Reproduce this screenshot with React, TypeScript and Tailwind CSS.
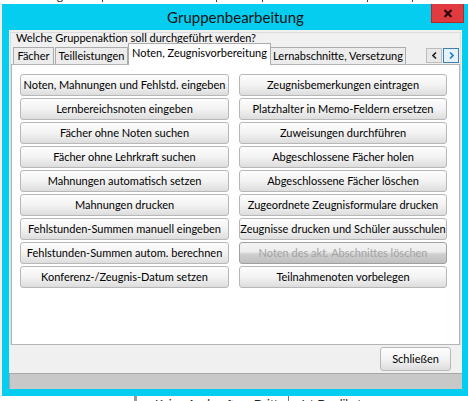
import React from 'react';

const leftButtons = [
  'Noten, Mahnungen und Fehlstd. eingeben',
  'Lernbereichsnoten eingeben',
  'Fächer ohne Noten suchen',
  'Fächer ohne Lehrkraft suchen',
  'Mahnungen automatisch setzen',
  'Mahnungen drucken',
  'Fehlstunden-Summen manuell eingeben',
  'Fehlstunden-Summen autom. berechnen',
  'Konferenz-/Zeugnis-Datum setzen',
];

const rightButtons = [
  'Zeugnisbemerkungen eintragen',
  'Platzhalter in Memo-Feldern ersetzen',
  'Zuweisungen durchführen',
  'Abgeschlossene Fächer holen',
  'Abgeschlossene Fächer löschen',
  'Zugeordnete Zeugnisformulare drucken',
  'Zeugnisse drucken und Schüler ausschulen',
  'Noten des akt. Abschnittes löschen',
  'Teilnahmenoten vorbelegen',
];

const WinButton: React.FC<{ label: string; disabled?: boolean }> = ({ label, disabled }) => {
  if (disabled) {
    return (
      <div className="h-[22px] rounded-[3px] border border-[#a0a0a0] bg-[linear-gradient(#f4f4f4,#ececec_45%,#cfcfcf_55%,#c0c0c0)] flex items-center justify-center text-[11px] text-[#a3a3a3] whitespace-nowrap">
        {label}
      </div>
    );
  }
  return (
    <div className="h-[22px] rounded-[3px] border border-[#b8b8b8] bg-gradient-to-b from-[#fdfdfd] via-[#f3f3f3] to-[#dddddd] flex items-center justify-center text-[11px] text-black whitespace-nowrap">
      {label}
    </div>
  );
};

const Chevron: React.FC<{ dir: 'left' | 'right'; color: string }> = ({ dir, color }) => (
  <svg width="5" height="7" viewBox="0 0 5 7">
    <path
      d={dir === 'left' ? 'M4 0.5 L1 3.5 L4 6.5' : 'M1 0.5 L4 3.5 L1 6.5'}
      fill="none"
      stroke={color}
      strokeWidth="1.6"
    />
  </svg>
);

export default function App() {
  return (
    <div className="w-[468px] h-[401px] overflow-hidden bg-white font-['Lato',sans-serif] text-black">
      {/* background app, top edge */}
      <div className="h-[4px] overflow-hidden relative">
        <div className="flex text-[12px] leading-[12px] -mt-[10px] text-[#222] whitespace-nowrap">
          <span className="ml-[7px]">Druckausgabe</span>
          <span className="ml-[20px] border-l border-[#444] pl-[9px]">Datenaustausch</span>
          <span className="ml-[19px] border-l border-[#444] pl-[6px]">Extras</span>
          <span className="ml-[7px] border-l border-[#444] pl-[9px]">Externe Module</span>
          <span className="ml-[10px] border-l border-[#444] pl-[9px]">Hilfe</span>
          <span className="ml-[10px] border-l border-[#444] pl-[8px]">Datenschutzerklärung</span>
        </div>
      </div>

      <div className="flex h-[392px]">
        <div className="w-[2px] bg-[#f4efe6]" />
        <div className="flex-1 flex flex-col bg-[#04cdf0] pl-[7px] pr-[6px] pb-[7px]">
          {/* title bar */}
          <div className="h-[26px] relative flex items-center justify-center">
            <span className="text-[15px] text-[#111] pt-[1px]">Gruppenbearbeitung</span>
            <div className="absolute top-0 right-[-2px] w-[33px] h-[19px] bg-[#e23b3f] border border-[#b02a2e] border-t-0 flex items-center justify-center">
              <svg width="10" height="9" viewBox="0 0 10 9">
                <path d="M1.5 1 L8.5 8 M8.5 1 L1.5 8" stroke="#2a0708" strokeWidth="2.2" />
              </svg>
            </div>
          </div>

          {/* client area */}
          <div className="flex-1 flex flex-col bg-[#f0f0f0]">
            <div className="pt-[2px] px-[1px]">
              <div className="border-t border-x border-[#dcdcdc] flex flex-col">
                <div className="h-[10px] pl-[5px] text-[11px] leading-[10px] whitespace-nowrap">
                  Welche Gruppenaktion soll durchgeführt werden?
                </div>

                {/* tabs */}
                <div className="h-[21px] flex items-end pl-[2px] relative z-10 whitespace-nowrap">
                  <div className="w-[41px] h-[17px] mr-[1px] border border-b-0 border-[#acacac] bg-[#ececec] flex items-center justify-center text-[11px]">
                    Fächer
                  </div>
                  <div className="w-[73px] h-[17px] border border-b-0 border-[#acacac] bg-[#ececec] flex items-center justify-center text-[11px]">
                    Teilleistungen
                  </div>
                  <div className="w-[143px] h-[22px] -mb-px border border-b-0 border-[#acacac] bg-white flex items-center justify-center text-[11px] pb-[2px]">
                    Noten, Zeugnisvorbereitung
                  </div>
                  <div className="w-[135px] h-[17px] border border-b-0 border-l-0 border-[#acacac] bg-[#ececec] flex items-center justify-center text-[11px]">
                    Lernabschnitte, Versetzung
                  </div>
                  <div className="ml-auto mr-[1px] self-start mt-[5px] flex gap-[1px]">
                    <div className="w-[16px] h-[15px] border border-[#bdbdbd] bg-[#e8e8e8] flex items-center justify-center">
                      <Chevron dir="left" color="#222" />
                    </div>
                    <div className="w-[16px] h-[15px] border border-[#3c7fb1] bg-[#e5f1fb] flex items-center justify-center">
                      <Chevron dir="right" color="#1f7fc4" />
                    </div>
                  </div>
                </div>

                {/* tab panel */}
                <div className="h-[281px] bg-white border border-[#b0b5ba]">
                  <div className="grid grid-cols-[209px_208px] gap-x-[10px] gap-y-[2px] pt-[9px] pl-[8px]">
                    {leftButtons.map((l, i) => (
                      <React.Fragment key={l}>
                        <WinButton label={l} />
                        <WinButton label={rightButtons[i]} disabled={i === 7} />
                      </React.Fragment>
                    ))}
                  </div>
                </div>
              </div>
            </div>

            {/* footer with close */}
            <div className="h-[28px] flex justify-end items-start pt-[2px] pr-[11px]">
              <div className="w-[71px] h-[24px] rounded-[3px] border border-[#b8b8b8] bg-gradient-to-b from-[#fdfdfd] via-[#f3f3f3] to-[#dddddd] flex items-center justify-center text-[11px]">
                Schließen
              </div>
            </div>

            {/* status bar */}
            <div className="h-[16px] bg-[#c8c8c8] border-t border-l border-[#a8a8a8]" />
          </div>
        </div>
      </div>

      {/* background app, bottom edge */}
      <div className="h-[5px] overflow-hidden flex text-[12px] leading-[16px] text-[#222] whitespace-nowrap">
        <div className="w-[134px]" />
        <div className="w-[3px] bg-[#9a9a9a]" />
        <span className="ml-[18px]">Keine Auskunft an Dritte</span>
        <span className="ml-[4px] border-l border-[#777] pl-[12px]">Ist Duplikat</span>
      </div>
    </div>
  );
}
